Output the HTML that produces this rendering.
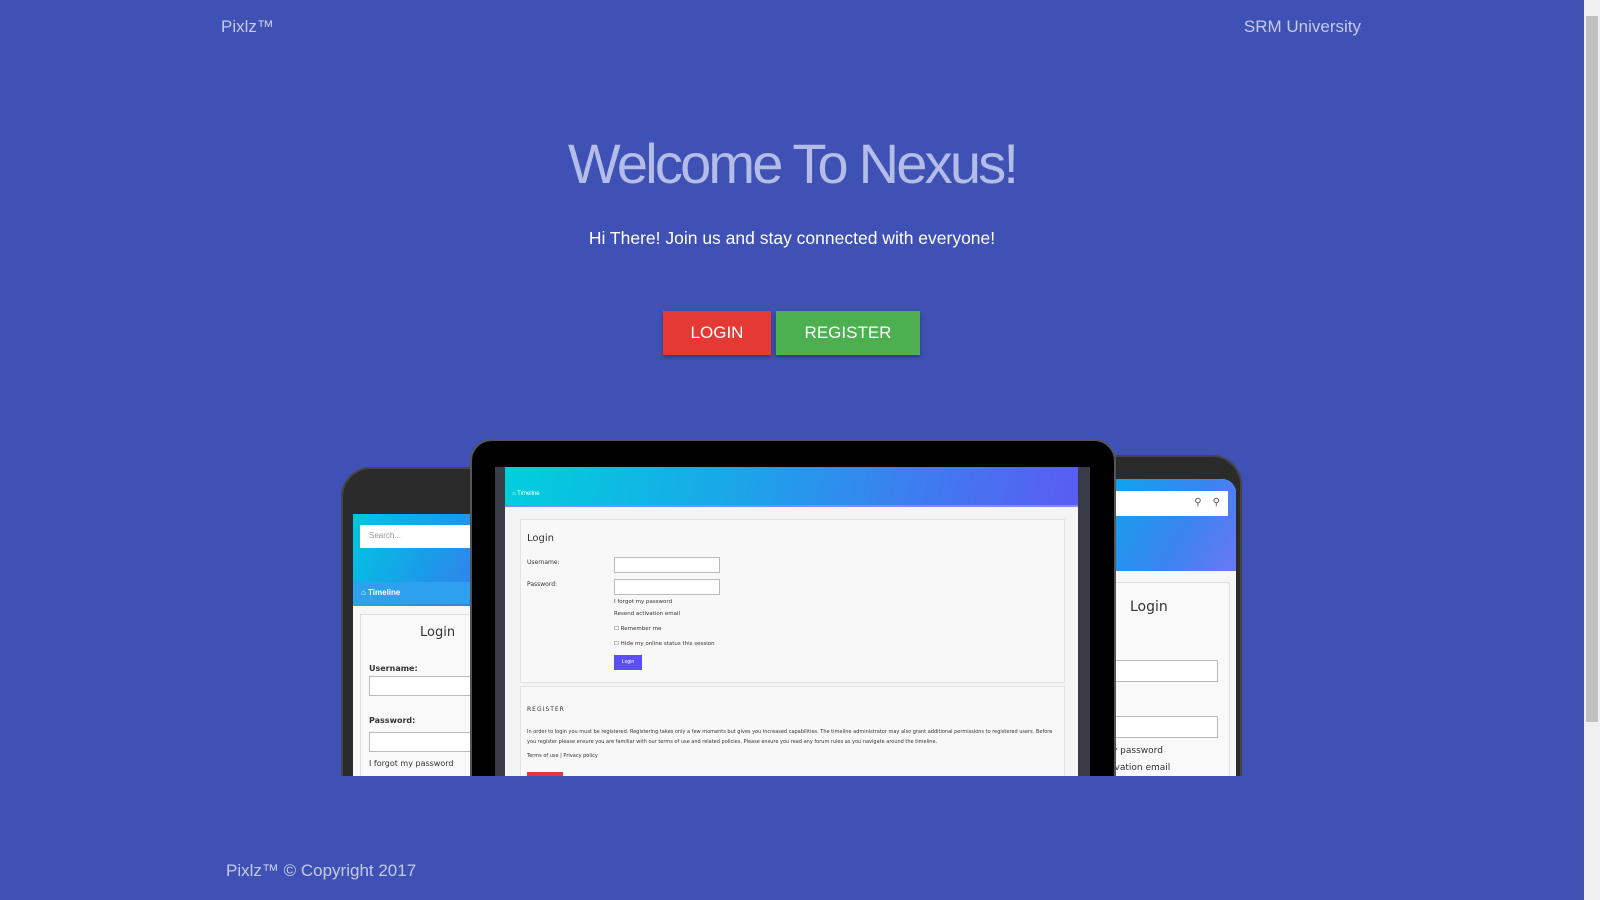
<!DOCTYPE html>
<html><head><meta charset="utf-8"><style>
*{margin:0;padding:0;box-sizing:border-box}
body{width:1600px;height:900px;background:#3f51b5;font-family:"Liberation Sans",sans-serif;position:relative;overflow:hidden}
.a{position:absolute}
.sb{left:1584px;top:0;width:16px;height:900px;background:#f0f0f0}
.th{left:1586px;top:16px;width:12px;height:706px;background:#c1c1c1}
.f{font-family:"DejaVu Sans",sans-serif;color:#333}
.inp{background:#fff;border:1px solid #bbb}
</style></head><body>
<div class="a" style="left:221px;top:17px;color:#c5cae9;font-size:17px">Pixlz™</div>
<div class="a" style="left:1240px;top:17px;color:#c5cae9;font-size:17px;width:121px;text-align:right">SRM University</div>
<div class="a" style="left:0;width:1584px;top:131px;text-align:center;color:#b4bce8;font-size:56px;letter-spacing:-2.8px">Welcome To Nexus!</div>
<div class="a" style="left:0;width:1584px;top:228px;text-align:center;color:#fff;font-size:17.5px">Hi There! Join us and stay connected with everyone!</div>
<div class="a" style="left:663px;top:311px;width:108px;height:44px;background:#e53935;color:#fff;font-size:17px;line-height:44px;text-align:center;box-shadow:0 2px 4px rgba(0,0,0,.3)">LOGIN</div>
<div class="a" style="left:776px;top:311px;width:144px;height:44px;background:#4caf50;color:#fff;font-size:17px;line-height:44px;text-align:center;box-shadow:0 2px 4px rgba(0,0,0,.3)">REGISTER</div>

<div class="a" style="left:0;top:439px;width:1584px;height:337px;overflow:hidden">
 <div class="a" style="left:341px;top:28px;width:140px;height:340px;background:#2b2b2b;border-radius:30px 0 0 0;border:2px solid #444"></div>
 <div class="a" style="left:353px;top:75px;width:120px;height:270px;background:#f7f7f7"></div>
 <div class="a" style="left:353px;top:75px;width:120px;height:92px;background:linear-gradient(120deg,#00c8e0,#1a9be8 60%,#3a7df0)"></div>
 <div class="a inp" style="left:360px;top:86px;width:115px;height:23px;border:none;font-size:8px;color:#999;padding:6px 9px" >Search...</div>
 <div class="a" style="left:353px;top:143px;width:120px;height:22px;background:#2da1ee;color:#fff;font-size:8px;font-weight:bold;padding:6px 8px">⌂ Timeline</div>
 <div class="a" style="left:360px;top:175px;width:115px;height:170px;border:1px solid #ddd;background:#f9f9f9"></div>
 <div class="a f" style="left:420px;top:186px;font-size:13px">Login</div>
 <div class="a f" style="left:369px;top:225px;font-size:8px;font-weight:bold">Username:</div>
 <div class="a inp" style="left:369px;top:237px;width:110px;height:20px"></div>
 <div class="a f" style="left:369px;top:277px;font-size:8px;font-weight:bold">Password:</div>
 <div class="a inp" style="left:369px;top:293px;width:110px;height:20px"></div>
 <div class="a f" style="left:369px;top:320px;font-size:8px">I forgot my password</div>
 <div class="a" style="left:1100px;top:16px;width:142px;height:340px;background:#2b2b2b;border-radius:0 30px 0 0;border:2px solid #444"></div>
 <div class="a" style="left:1100px;top:40px;width:136px;height:300px;background:#f7f7f7;border-radius:0 14px 0 0"></div>
 <div class="a" style="left:1100px;top:40px;width:136px;height:92px;background:linear-gradient(120deg,#0aa8e8,#3a84f0 60%,#6b78f5);border-radius:0 14px 0 0"></div>
 <div class="a" style="left:1100px;top:52px;width:128px;height:25px;background:#fff;color:#555;font-size:10px;text-align:right;padding:6px 8px">&#9906;&nbsp;&nbsp;&nbsp;&nbsp;&#9906;</div>
 <div class="a" style="left:1110px;top:143px;width:120px;height:200px;border:1px solid #ddd;background:#f9f9f9"></div>
 <div class="a f" style="left:1130px;top:160px;font-size:14px">Login</div>
 <div class="a inp" style="left:1110px;top:221px;width:108px;height:22px"></div>
 <div class="a inp" style="left:1110px;top:277px;width:108px;height:22px"></div>
 <div class="a f" style="left:1112px;top:307px;font-size:9px">y password</div>
 <div class="a f" style="left:1112px;top:324px;font-size:9px">ivation email</div>
 <div class="a" style="left:470px;top:0;width:646px;height:400px;background:#000;border-radius:22px 22px 0 0;border:2px solid #555"></div>
 <div class="a" style="left:495px;top:28px;width:595px;height:320px;background:#3a3d48"></div>
 <div class="a" style="left:505px;top:28px;width:573px;height:320px;background:#f4f4f4"></div>
 <div class="a" style="left:505px;top:28px;width:573px;height:38px;background:linear-gradient(100deg,#00d0dc,#1aa6e8 40%,#3b7ff0 70%,#5a5cf2)"></div>
 <div class="a" style="left:505px;top:66px;width:573px;height:2px;background:#7d8cf5"></div>
 <div class="a" style="left:512px;top:52px;color:#fff;font-size:6px">⌂ Timeline</div>
 <div class="a" style="left:520px;top:80px;width:545px;height:164px;border:1px solid #e2e2e2;background:#f8f8f8"></div>
 <div class="a f" style="left:527px;top:94px;font-size:10px">Login</div>
 <div class="a f" style="left:527px;top:120px;font-size:6px">Username:</div>
 <div class="a inp" style="left:614px;top:118px;width:106px;height:16px"></div>
 <div class="a f" style="left:527px;top:142px;font-size:6px">Password:</div>
 <div class="a inp" style="left:614px;top:140px;width:106px;height:16px"></div>
 <div class="a f" style="left:614px;top:160px;font-size:5.5px">I forgot my password</div>
 <div class="a f" style="left:614px;top:172px;font-size:5.5px">Resend activation email</div>
 <div class="a f" style="left:614px;top:187px;font-size:5.5px">☐ Remember me</div>
 <div class="a f" style="left:614px;top:202px;font-size:5.5px">☐ Hide my online status this session</div>
 <div class="a" style="left:614px;top:216px;width:28px;height:15px;background:#5a4ef5;color:#fff;font-size:5px;text-align:center;line-height:15px">Login</div>
 <div class="a" style="left:520px;top:247px;width:545px;height:100px;border:1px solid #e2e2e2;background:#f8f8f8"></div>
 <div class="a f" style="left:527px;top:267px;font-size:6px;letter-spacing:1px">REGISTER</div>
 <div class="a f" style="left:527px;top:288px;width:530px;font-size:5px;line-height:10px">In order to login you must be registered. Registering takes only a few moments but gives you increased capabilities. The timeline administrator may also grant additional permissions to registered users. Before you register please ensure you are familiar with our terms of use and related policies. Please ensure you read any forum rules as you navigate around the timeline.</div>
 <div class="a f" style="left:527px;top:314px;font-size:5px">Terms of use | Privacy policy</div>
 <div class="a" style="left:527px;top:333px;width:36px;height:6px;background:#e53935"></div>
</div>

<div class="a" style="left:226px;top:861px;color:#c5cae9;font-size:17px">Pixlz™ © Copyright 2017</div>
<div class="a sb"></div><div class="a th"></div>
</body></html>
